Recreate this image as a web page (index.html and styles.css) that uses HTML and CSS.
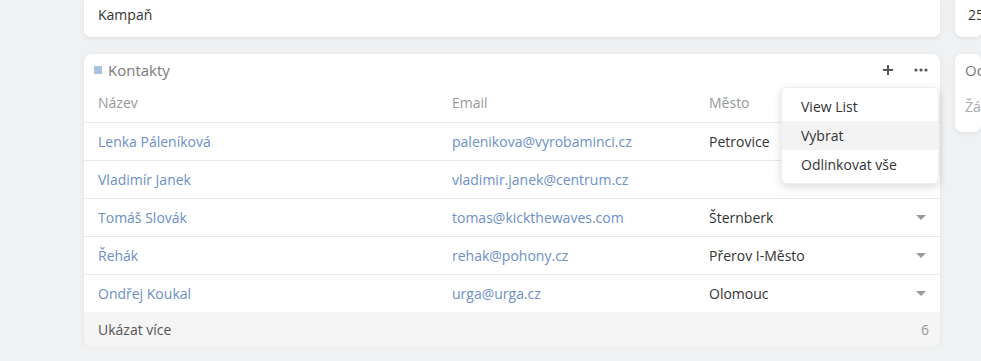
FILE: index.html
```html
<!DOCTYPE html>
<html lang="cs">
<head>
    <meta charset="UTF-8">
    <title>Kontakty</title>
    <link rel="stylesheet" href="styles.css">
</head>
<body>
    <div class="layout">
        <div class="main-col">
            <div class="panel top-panel">
                <span class="field-value">Kampaň</span>
            </div>

            <div class="panel contacts">
                <div class="panel-head">
                    <span class="panel-icon"></span>
                    <span class="panel-title">Kontakty</span>
                    <div class="panel-actions">
                        <svg class="act" width="12" height="12" viewBox="0 0 12 12"><path d="M6 1v10M1 6h10" stroke="#555" stroke-width="2"/></svg>
                        <svg class="act" width="14" height="4" viewBox="0 0 14 4"><circle cx="2" cy="2" r="1.6" fill="#555"/><circle cx="7" cy="2" r="1.6" fill="#555"/><circle cx="12" cy="2" r="1.6" fill="#555"/></svg>
                    </div>
                </div>

                <div class="row row-head">
                    <span class="c-name">Název</span>
                    <span class="c-email">Email</span>
                    <span class="c-city">Město</span>
                </div>
                <div class="row">
                    <a class="c-name link">Lenka Páleníková</a>
                    <a class="c-email link">palenikova@vyrobaminci.cz</a>
                    <span class="c-city">Petrovice</span>
                    <span class="caret"></span>
                </div>
                <div class="row">
                    <a class="c-name link">Vladimír Janek</a>
                    <a class="c-email link">vladimir.janek@centrum.cz</a>
                    <span class="c-city"></span>
                    <span class="caret"></span>
                </div>
                <div class="row">
                    <a class="c-name link">Tomáš Slovák</a>
                    <a class="c-email link">tomas@kickthewaves.com</a>
                    <span class="c-city">Šternberk</span>
                    <span class="caret"></span>
                </div>
                <div class="row">
                    <a class="c-name link">Řehák</a>
                    <a class="c-email link">rehak@pohony.cz</a>
                    <span class="c-city">Přerov I-Město</span>
                    <span class="caret"></span>
                </div>
                <div class="row">
                    <a class="c-name link">Ondřej Koukal</a>
                    <a class="c-email link">urga@urga.cz</a>
                    <span class="c-city">Olomouc</span>
                    <span class="caret"></span>
                </div>
                <div class="show-more">
                    <span>Ukázat více</span>
                    <span class="count">6</span>
                </div>

                <ul class="menu">
                    <li>View List</li>
                    <li class="active">Vybrat</li>
                    <li>Odlinkovat vše</li>
                </ul>
            </div>
        </div>

        <div class="side-col">
            <div class="panel top-panel side-top">
                <span class="field-value">25</span>
            </div>
            <div class="panel side-card">
                <div class="side-title">Od</div>
                <div class="side-empty">Žá</div>
            </div>
        </div>
    </div>
</body>
</html>
```

FILE: styles.css
```css
body {
    font-family: 'Open Sans', Arial, sans-serif;
    font-size: 14px;
    margin: 0;
    padding: 0;
    background: #f0f1f3;
    color: #333;
    overflow: hidden;
}

.layout {
    display: flex;
    gap: 15px;
    padding-left: 84px;
}

.main-col {
    width: 856px;
    flex-shrink: 0;
}

.side-col {
    flex: 1;
    min-width: 0;
}

.panel {
    background: #fff;
    border-radius: 7px;
    box-shadow: 0 1px 4px rgba(0, 0, 0, 0.08);
}

.top-panel {
    height: 37px;
    border-radius: 0 0 7px 7px;
    padding: 0 14px;
    box-sizing: border-box;
    line-height: 29px;
    margin-bottom: 17px;
}

.field-value {
    color: #333;
}

.contacts {
    position: relative;
}

.panel-head {
    display: flex;
    align-items: center;
    height: 32px;
    padding: 0 12px 0 10px;
}

.panel-icon {
    width: 8px;
    height: 8px;
    background: #a7c3df;
    margin-right: 6px;
}

.panel-title {
    font-size: 15px;
    color: #7a7a7a;
}

.panel-actions {
    margin-left: auto;
    display: flex;
    align-items: center;
    gap: 20px;
}

.act {
    display: block;
}

.row {
    display: flex;
    align-items: center;
    height: 37px;
    border-top: 1px solid #e9e9e9;
    padding: 0 14px;
}

.row-head {
    border-top: none;
    height: 32px;
    padding-bottom: 4px;
    color: #999;
}

.c-name {
    width: 354px;
}

.c-email {
    width: 257px;
}

.c-city {
    flex: 1;
}

.link {
    color: #6d8fc6;
    text-decoration: none;
}

.caret {
    width: 0;
    height: 0;
    border-left: 5px solid transparent;
    border-right: 5px solid transparent;
    border-top: 5px solid #9a9a9a;
}

.show-more {
    display: flex;
    justify-content: space-between;
    align-items: center;
    height: 34px;
    padding: 0 11px 0 14px;
    background: #f5f5f5;
    border-radius: 0 0 7px 7px;
    color: #555;
}

.count {
    color: #999;
}

.menu {
    position: absolute;
    top: 33px;
    right: 1px;
    width: 158px;
    margin: 0;
    padding: 4px 0;
    list-style: none;
    background: #fff;
    border: 1px solid #eee;
    border-radius: 6px;
    box-shadow: 0 3px 10px rgba(0, 0, 0, 0.15);
    box-sizing: border-box;
}

.menu li {
    height: 29px;
    line-height: 29px;
    padding: 0 19px;
    color: #333;
}

.menu li.active {
    background: #f3f3f3;
}

.side-top {
    padding-left: 13px;
}

.side-card {
    height: 78px;
    padding: 0 10px;
}

.side-title {
    height: 32px;
    line-height: 32px;
    font-size: 15px;
    color: #7a7a7a;
}

.side-empty {
    padding-top: 11px;
    color: #aaa;
}
```
